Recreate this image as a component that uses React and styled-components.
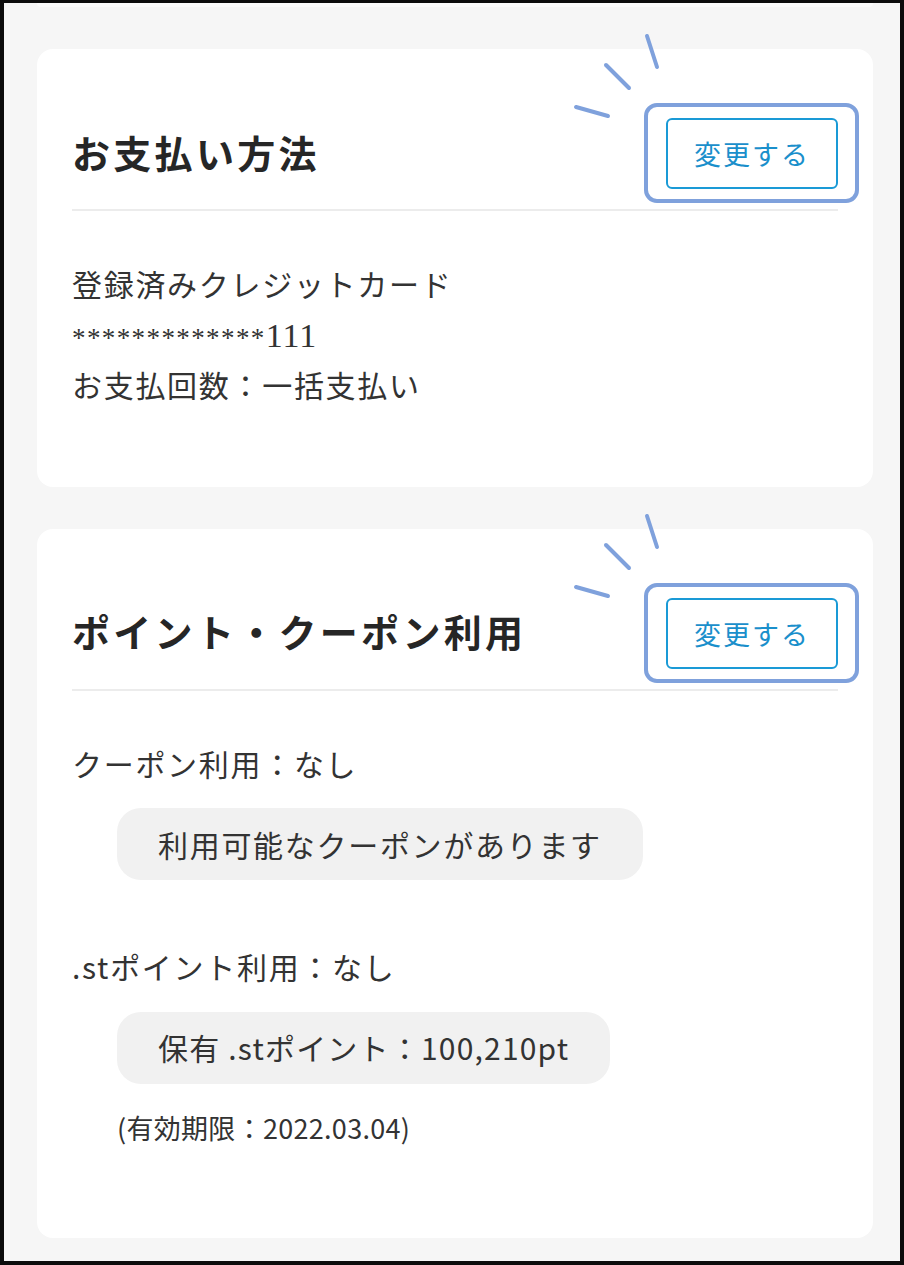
import styled, { createGlobalStyle } from "styled-components";

const GlobalStyle = createGlobalStyle`
  * {
    box-sizing: border-box;
  }

  body {
    margin: 0;
    font-family: "Noto Sans CJK JP", "Noto Sans", sans-serif;
    color: #333;
  }
`;

const Frame = styled.div`
  width: 904px;
  height: 1265px;
  border: 4px solid #0c0c0c;
  border-top-width: 3px;
  background-color: #f6f6f6;
  overflow: hidden;
  padding: 0 27px 0 33px;
  display: flex;
  flex-direction: column;
  gap: 42px;
`;

const CardTail = styled.div`
  height: 4px;
  background-color: #fbfbfb;
  border-radius: 0 0 8px 8px;
`;

const Card = styled.section`
  background-color: #fff;
  border-radius: 16px;
  padding: 0 35px ${(p) => p.$bottom}px;
`;

const Header = styled.div`
  display: flex;
  justify-content: space-between;
  align-items: center;
  padding: 69px 0 20px;
  border-bottom: 2px solid #ececec;
`;

const Title = styled.h2`
  margin: 0;
  font-size: 38px;
  font-weight: 700;
  letter-spacing: 3.3px;
  color: #262626;
  line-height: 1.2;
  transform: translateY(-2px);
`;

const Highlight = styled.div`
  position: relative;

  &::before {
    content: "";
    position: absolute;
    left: -22px;
    right: -21px;
    top: -15px;
    bottom: -14px;
    border: 4px solid #7fa1dc;
    border-radius: 13px;
    pointer-events: none;
  }
`;

const Rays = styled.svg`
  position: absolute;
  left: -95px;
  top: -90px;
  width: 95px;
  height: 90px;
  overflow: visible;
`;

const ChangeButton = styled.button`
  width: 172px;
  height: 71px;
  border: 2px solid #1a9ad6;
  border-radius: 6px;
  background: #fff;
  color: #1a8fcb;
  font-family: inherit;
  font-size: 27px;
  letter-spacing: 2px;
  padding: 0;
  cursor: pointer;
`;

const Body = styled.div`
  padding-top: 47px;
  font-size: 30px;
  letter-spacing: 1.7px;
  line-height: 50.5px;
`;

const Line = styled.p`
  margin: ${(p) => p.$top || 0}px 0 0;
  height: 50.5px;
`;

const Masked = styled.span`
  font-family: "Liberation Serif", serif;
  font-size: 27px;
  letter-spacing: 1.4px;
  line-height: 1;
`;

const Digits = styled.span`
  font-family: "Liberation Serif", serif;
  font-size: 34px;
  letter-spacing: 1px;
  line-height: 1;
`;

const Pill = styled.div`
  display: inline-flex;
  align-items: center;
  height: 72px;
  margin: 20px 0 0 45px;
  padding: 0 41px;
  border-radius: 24px;
  background-color: #f1f1f1;
  font-size: 30px;
  letter-spacing: ${(p) => p.$spacing ?? 1.7}px;
`;

const Note = styled.p`
  margin: 26px 0 0 45px;
  font-size: 27px;
  letter-spacing: 0.3px;
  line-height: 36px;
`;

const Block = styled.div`
  display: flex;
  flex-direction: column;
  align-items: flex-start;
`;

const ChangeAction = () => (
  <Highlight>
    <Rays viewBox="0 0 95 90">
      <g stroke="#7fa1dc" strokeWidth="4" strokeLinecap="round">
        <line x1="76" y1="8" x2="86" y2="39" />
        <line x1="35" y1="37" x2="58" y2="60" />
        <line x1="5" y1="79" x2="37" y2="88" />
      </g>
    </Rays>
    <ChangeButton>変更する</ChangeButton>
  </Highlight>
);

const App = () => {
  return (
    <>
      <GlobalStyle />
      <Frame>
        <CardTail />
        <Card $bottom={77}>
          <Header>
            <Title>お支払い方法</Title>
            <ChangeAction />
          </Header>
          <Body>
            <Line>登録済みクレジットカード</Line>
            <Line>
              <Masked>*************</Masked>
              <Digits>111</Digits>
            </Line>
            <Line>お支払回数：一括支払い</Line>
          </Body>
        </Card>
        <Card $bottom={92}>
          <Header>
            <Title>ポイント・クーポン利用</Title>
            <ChangeAction />
          </Header>
          <Body>
            <Block>
              <Line>クーポン利用：なし</Line>
              <Pill>利用可能なクーポンがあります</Pill>
            </Block>
            <Block>
              <Line $top={61}>.stポイント利用：なし</Line>
              <Pill $spacing={1.2}>保有 .stポイント：100,210pt</Pill>
              <Note>(有効期限：2022.03.04)</Note>
            </Block>
          </Body>
        </Card>
      </Frame>
    </>
  );
};

export default App;
